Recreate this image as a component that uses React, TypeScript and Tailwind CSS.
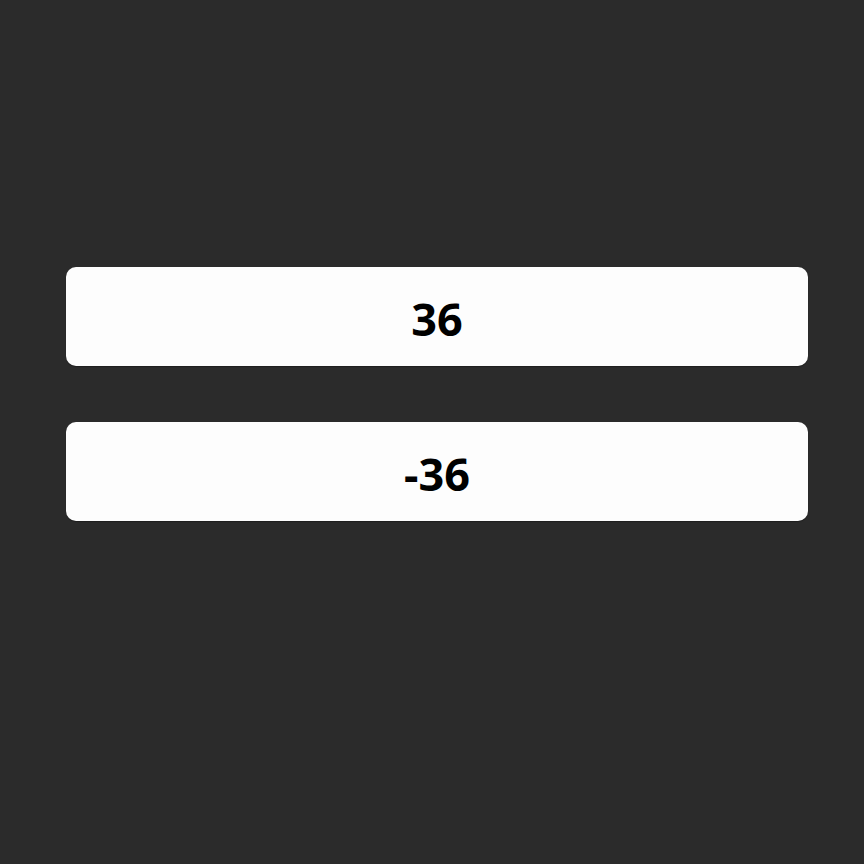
import React from 'react';

const values = ['36', '-36'];

const App: React.FC = () => {
  return (
    <div className="min-h-[864px] w-full bg-[#2b2b2b] pt-[267px] pl-[66px] font-['Noto_Sans',sans-serif]">
      <div className="flex flex-col gap-[56px] w-[742px]">
        {values.map((v) => (
          <div
            key={v}
            className="h-[99px] rounded-[10px] bg-[#fdfdfd] flex items-center justify-center shadow-[0_1px_1px_rgba(0,0,0,0.3)]"
          >
            <span className="text-[45px] font-bold text-black leading-none pt-[3px]">{v}</span>
          </div>
        ))}
      </div>
    </div>
  );
};

export default App;
